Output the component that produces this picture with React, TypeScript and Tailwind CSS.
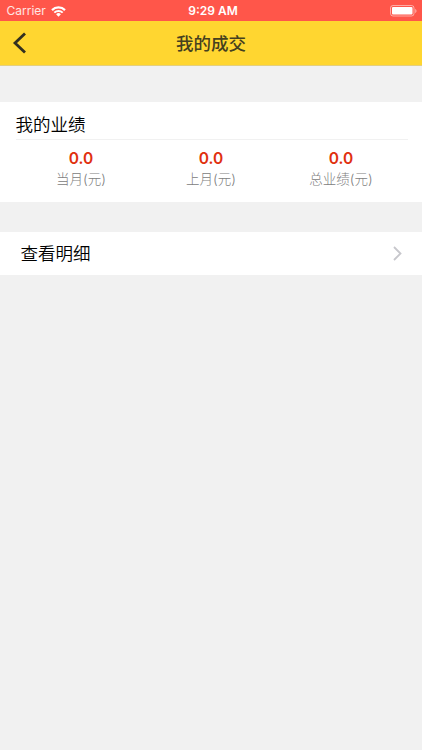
const stats = [
  { label: '当月(元)', value: '0.0' },
  { label: '上月(元)', value: '0.0' },
  { label: '总业绩(元)', value: '0.0' },
];

function StatusBar() {
  return (
    <div className="grid h-[21px] grid-cols-3 items-center bg-[#ff564a] pt-px text-white">
      <div className="flex items-center gap-[5px] pl-[6.5px] text-[12px] text-white/85">
        <span>Carrier</span>
        <svg width="15" height="11" viewBox="0 0 15 11" fill="none" stroke="white">
          <path d="M1 4.1a9.2 9.2 0 0 1 13 0" strokeWidth="2.2" />
          <path d="M3.3 6.6a6 6 0 0 1 8.4 0" strokeWidth="2" />
          <path d="M5.1 8.2 7.5 10.8 9.9 8.2a3.4 3.4 0 0 0-4.8 0Z" fill="white" stroke="none" />
        </svg>
      </div>
      <span className="pl-1 text-center text-[12px] font-semibold">9:29 AM</span>
      <div className="flex justify-end pr-[5px]">
        <svg width="27" height="12" viewBox="0 0 27 12" fill="none">
          <rect x="0.5" y="0.5" width="23.5" height="10.5" rx="2.5" stroke="white" strokeOpacity="0.5" />
          <rect x="2" y="2" width="20.5" height="7.5" rx="1" fill="white" />
          <path d="M25.2 4v4c.8-.3 1.3-1.1 1.3-2s-.5-1.7-1.3-2Z" fill="white" fillOpacity="0.5" />
        </svg>
      </div>
    </div>
  );
}

function NavBar() {
  return (
    <header className="grid h-[45px] grid-cols-3 items-center border-b border-[#e3cf80] bg-[#ffd630] text-[#45401f]">
      <button className="pl-3">
        <svg width="15" height="22" viewBox="0 0 15 22" fill="none" stroke="#333020" strokeWidth="2.8">
          <path d="M13 1.5 3 11l10 9.5" />
        </svg>
      </button>
      <h1 className="pt-[2px] text-center text-[17.5px] font-medium">我的成交</h1>
    </header>
  );
}

export default function App() {
  return (
    <div className="min-h-screen bg-[#f1f1f1] font-[Inter,'Noto_Sans_CJK_SC',sans-serif]">
      <StatusBar />
      <NavBar />

      <section className="mt-9 h-[100px] bg-white">
        <h2 className="ml-[15.5px] mr-[14px] h-[38px] border-b border-[#f1f1f1] pt-[6px] text-[17.5px] font-[350] leading-[34px] text-black">我的业绩</h2>
        <div className="grid grid-cols-3 px-4 pt-[9px]">
          {stats.map((stat) => (
            <div key={stat.label} className="flex flex-col items-center">
              <span className="text-[15.5px] font-semibold leading-[20px] text-[#e0300f]">{stat.value}</span>
              <span className="text-[13.5px] font-light leading-[20px] text-[#808080]">{stat.label}</span>
            </div>
          ))}
        </div>
      </section>

      <button className="mt-[30px] flex h-[43px] w-full items-center justify-between bg-white pl-[20.5px] pr-5 text-[17.5px] font-[350] text-black">
        <span className="pt-[2px]">查看明细</span>
        <svg className="-mt-px" width="9" height="15" viewBox="0 0 9 15" fill="none" stroke="#c7c7cc" strokeWidth="1.8">
          <path d="m1 1 6.5 6.5L1 14" />
        </svg>
      </button>
    </div>
  );
}
